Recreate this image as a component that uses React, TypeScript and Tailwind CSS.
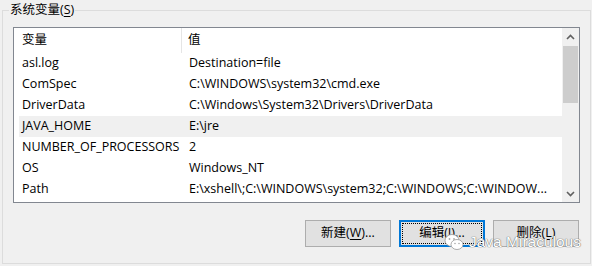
import React from "react";

const rows: [string, string][] = [
  ["asl.log", "Destination=file"],
  ["ComSpec", "C:\\WINDOWS\\system32\\cmd.exe"],
  ["DriverData", "C:\\Windows\\System32\\Drivers\\DriverData"],
  ["JAVA_HOME", "E:\\jre"],
  ["NUMBER_OF_PROCESSORS", "2"],
  ["OS", "Windows_NT"],
  ["Path", "E:\\xshell\\;C:\\WINDOWS\\system32;C:\\WINDOWS;C:\\WINDOW..."],
];

function Button({
  label,
  hotkey,
  tail,
  focused,
}: {
  label: string;
  hotkey: string;
  tail: string;
  focused?: boolean;
}) {
  return (
    <button
      type="button"
      className={`relative flex h-[27px] w-[86px] items-center justify-center bg-[#e1e1e1] text-[12.5px] text-black ${
        focused ? "border-2 border-[#0078d7]" : "border border-[#adadad]"
      }`}
    >
      {focused ? (
        <span className="pointer-events-none absolute inset-[1px] border border-dotted border-black" />
      ) : null}
      <span>
        {label}(<span className="underline underline-offset-2">{hotkey}</span>){tail}
      </span>
    </button>
  );
}

function Chevron({ up }: { up?: boolean }) {
  return (
    <svg width="9" height="6" viewBox="0 0 9 6" className="block">
      <path
        d={up ? "M1 5 L4.5 1.5 L8 5" : "M1 1 L4.5 4.5 L8 1"}
        fill="none"
        stroke="#606060"
        strokeWidth="1.6"
      />
    </svg>
  );
}

function WeChat() {
  return (
    <svg width="20" height="18" viewBox="0 0 20 18">
      <ellipse cx="8" cy="7.5" rx="7" ry="6" fill="white" stroke="#999" strokeWidth="0.8" />
      <ellipse cx="13" cy="11.5" rx="6" ry="5" fill="white" stroke="#999" strokeWidth="0.8" />
      <circle cx="5.5" cy="6" r="0.9" fill="#aaa" />
      <circle cx="10" cy="6" r="0.9" fill="#aaa" />
      <circle cx="11" cy="10.5" r="0.8" fill="#aaa" />
      <circle cx="15" cy="10.5" r="0.8" fill="#aaa" />
    </svg>
  );
}

export default function App() {
  return (
    <div
      className="relative h-[266px] w-[592px] overflow-hidden bg-[#f0f0f0] pl-[2px] pt-[10px] text-[12.5px] text-black"
      style={{ fontFamily: '"Open Sans", "Noto Sans CJK SC", sans-serif' }}
    >
      <div className="relative h-[254px] w-[589px] border border-[#dcdcdc] pl-[10px] pt-[16px]">
        <span className="absolute left-[6px] top-[-10px] bg-[#f0f0f0] px-[1px] leading-[18px]">
          系统变量(<span className="underline underline-offset-2">S</span>)
        </span>

        {/* list */}
        <div className="flex h-[176px] w-[567px] border border-[#828790] bg-white">
          <div className="flex-1">
            <div className="flex h-[25px] items-center pl-[5px]">
              <div className="flex h-full w-[163px] items-center border-r border-[#e5e5e5] pl-[3px]">
                变量
              </div>
              <div className="pl-[6px]">值</div>
            </div>
            {rows.map(([k, v]) => (
              <div
                key={k}
                className={`ml-[5px] flex h-[21px] items-center whitespace-nowrap ${
                  k === "JAVA_HOME" ? "bg-[#f0f0f0]" : ""
                }`}
              >
                <div className="w-[170px] pl-[3px]">{k}</div>
                <div>{v}</div>
              </div>
            ))}
          </div>
          <div className="flex w-[17px] flex-col bg-[#f0f0f0]">
            <div className="flex h-[17px] items-center justify-center">
              <Chevron up />
            </div>
            <div className="mx-[1px] mt-[1px] h-[57px] bg-[#cdcdcd]" />
            <div className="flex-1" />
            <div className="flex h-[17px] items-center justify-center">
              <Chevron />
            </div>
          </div>
        </div>

        {/* buttons */}
        <div className="mt-[17px] flex w-[566px] justify-end gap-[8px]">
          <Button label="新建" hotkey="W" tail="..." />
          <Button label="编辑" hotkey="I" tail="..." focused />
          <Button label="删除" hotkey="L" tail="" />
        </div>
      </div>

      {/* watermark */}
      <div className="absolute left-[444px] top-[230px] flex items-center gap-[5px] text-[15.5px] text-white [text-shadow:0_0_1px_#666,0_0_1px_#666]">
        <WeChat />
        <span style={{ fontFamily: '"Liberation Sans", sans-serif' }}>Java Miraculous</span>
      </div>
    </div>
  );
}
